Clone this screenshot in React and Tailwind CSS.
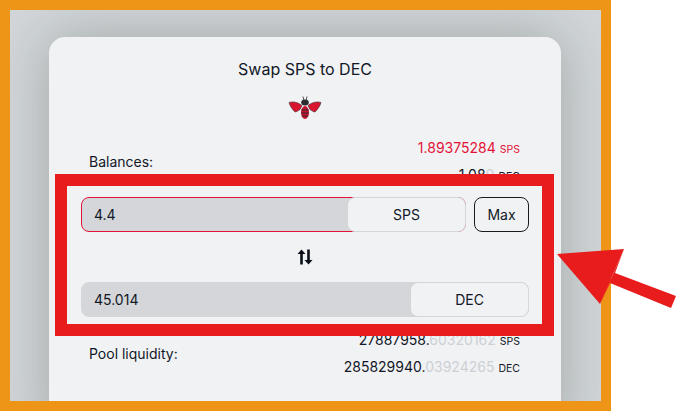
import React from 'react';

const font = { fontFamily: 'Inter, "Liberation Sans", sans-serif' };

function BeeLogo() {
  return (
    <svg width="34" height="26" viewBox="0 0 34 26" className="block">
      <path d="M15 1.5 L15.8 5 M19 1.5 L18.2 5" stroke="#555" strokeWidth="1" fill="none" />
      <path d="M1 7.5 C6 6 11 8 14 10.5 L12 14.5 C10 16 8 17 7 17 C4 14 2 11 1 7.5 Z" fill="#d8142f" stroke="#3a2a2c" strokeWidth="0.6" />
      <path d="M33 7.5 C28 6 23 8 20 10.5 L22 14.5 C24 16 26 17 27 17 C30 14 32 11 33 7.5 Z" fill="#d8142f" stroke="#3a2a2c" strokeWidth="0.6" />
      <ellipse cx="17" cy="7.5" rx="3.8" ry="3" fill="#2b2d31" />
      <ellipse cx="17" cy="17.5" rx="4" ry="6.5" fill="#c8142e" />
      <path d="M13.2 15h7.6M13.2 18h7.6M13.8 21h6.4" stroke="#2b2d31" strokeWidth="1.2" />
    </svg>
  );
}

function SwapIcon() {
  return (
    <svg width="16" height="16" viewBox="0 0 16 16" className="block">
      <path d="M4.5 0.5 L8.5 5 H5.8 V15.5 H3.2 V5 H0.5 Z" fill="#0b0f19" />
      <path d="M11.5 15.5 L7.5 11 H10.2 V0.5 H12.8 V11 H15.5 Z" fill="#0b0f19" />
    </svg>
  );
}

function Amount({ whole, fraction, unit, red }) {
  return (
    <div className={red ? 'text-[#e31337] text-right' : 'text-[#111827] text-right'}>
      {whole}
      <span className={red ? '' : 'text-[#cdd0d5]'}>{fraction}</span>
      <span className="text-[10.5px] leading-none ml-1">{unit}</span>
    </div>
  );
}

function InfoRow({ label, children }) {
  return (
    <div className="flex items-center justify-between pl-2 pr-[9px] text-sm leading-5 text-[#111827]">
      <span>{label}</span>
      <div className="flex flex-col gap-[7px]">{children}</div>
    </div>
  );
}

function TokenInput({ value, unit, active }) {
  return (
    <div className={active ? 'relative flex-1 h-[35px] rounded-lg bg-[#d4d6da] border border-[#e31337]' : 'relative flex-1 h-[35px] rounded-lg bg-[#d4d6da] border border-[#d4d6da]'}>
      <input readOnly value={value} className="w-full h-full bg-transparent pl-3 text-sm text-[#111827] outline-none" style={font} />
      <div className="absolute -right-px -top-px -bottom-px w-[119px] flex items-center justify-center rounded-lg border border-[#d4d6da] bg-[#f1f2f4] text-sm text-[#111827]">
        {unit}
      </div>
    </div>
  );
}

export default function App() {
  return (
    <div className="relative w-[677px] h-[411px] bg-white overflow-hidden" style={font}>
      <div className="w-[611px] h-[411px] border-[10px] border-[#ee9518] bg-[#d2d6d9] overflow-hidden">
        <div className="ml-[39px] mt-[27px] w-[512px] h-[400px] rounded-2xl bg-[#f1f2f4] px-8 pt-5 shadow-[0_0_55px_rgba(20,30,20,0.26)]">
          <h2 className="text-center text-base leading-6 text-[#111827]">Swap SPS to DEC</h2>
          <div className="flex justify-center mt-[14px] mb-[17px]">
            <BeeLogo />
          </div>
          <InfoRow label="Balances:">
            <Amount whole="1.89375284" fraction="" unit="SPS" red />
            <Amount whole="1.08" fraction="0" unit="DEC" />
          </InfoRow>
          <div className="flex gap-2 mt-[12px]">
            <TokenInput value="4.4" unit="SPS" active />
            <button className="w-[55px] h-[35px] rounded-lg border border-[#1a1a1a] text-sm text-[#111827]">Max</button>
          </div>
          <div className="flex justify-center my-[17px]">
            <SwapIcon />
          </div>
          <div className="flex">
            <TokenInput value="45.014" unit="DEC" />
          </div>
          <div className="mt-[13px]">
            <InfoRow label="Pool liquidity:">
              <Amount whole="27887958." fraction="60320162" unit="SPS" />
              <Amount whole="285829940." fraction="03924265" unit="DEC" />
            </InfoRow>
          </div>
        </div>
      </div>
      {/* annotation drawn over the screenshot */}
      <div className="absolute left-[55px] top-[174px] w-[499px] h-[162px] border-[12px] border-[#e81c1c]" />
      <svg className="absolute left-0 top-0" width="677" height="411" viewBox="0 0 677 411">
        <path d="M557 254 L624 249 L600 304 L610 283 L671 308 L676 296 L615 273 L624 249 Z" fill="#e81c1c" />
        <path d="M557 254 L624 249 L600 304 Z" fill="#e81c1c" />
      </svg>
    </div>
  );
}
